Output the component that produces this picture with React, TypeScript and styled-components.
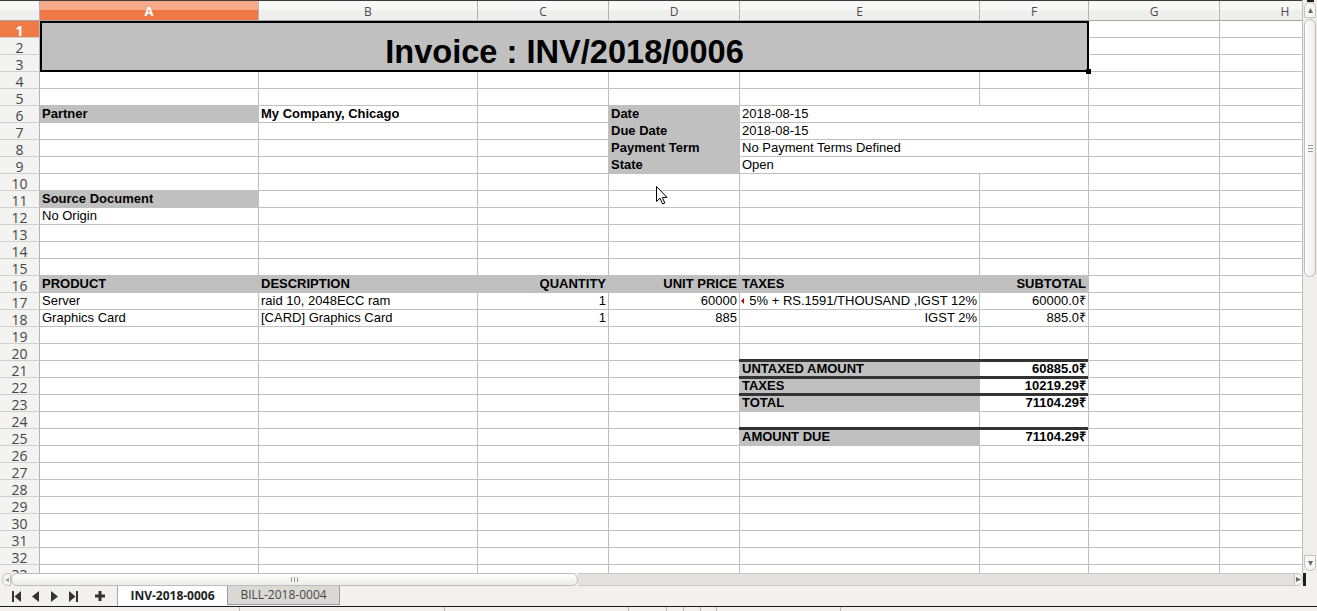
import React from 'react';
import styled, { createGlobalStyle, css } from 'styled-components';

const GlobalStyle = createGlobalStyle`
  html, body { margin: 0; padding: 0; overflow: hidden; background: #f2f1f0; }
  body { font-family: "Liberation Sans", Arial, sans-serif; }
`;

type Align = 'left' | 'right' | 'center';
interface CellDef {
  text?: string;
  bold?: boolean;
  align?: Align;
  fill?: boolean;
  cs?: number;
  rs?: number;
  thick?: boolean;
  title?: boolean;
  clipMark?: boolean;
}

const COLS = [
  { name: 'A', w: 219 },
  { name: 'B', w: 219 },
  { name: 'C', w: 131 },
  { name: 'D', w: 131 },
  { name: 'E', w: 240 },
  { name: 'F', w: 109 },
  { name: 'G', w: 131 },
  { name: 'H', w: 131 },
];
const ROW_COUNT = 33;

const CELLS: Record<string, CellDef> = {
  A1: { text: 'Invoice : INV/2018/0006', title: true, fill: true, cs: 6, rs: 3 },
  A6: { text: 'Partner', bold: true, fill: true },
  B6: { text: 'My Company, Chicago', bold: true },
  D6: { text: 'Date', bold: true, fill: true },
  E6: { text: '2018-08-15', cs: 2 },
  D7: { text: 'Due Date', bold: true, fill: true },
  E7: { text: '2018-08-15', cs: 2 },
  D8: { text: 'Payment Term', bold: true, fill: true },
  E8: { text: 'No Payment Terms Defined', cs: 2 },
  D9: { text: 'State', bold: true, fill: true },
  E9: { text: 'Open', cs: 2 },
  A11: { text: 'Source Document', bold: true, fill: true },
  A12: { text: 'No Origin' },
  A16: { text: 'PRODUCT', bold: true, fill: true },
  B16: { text: 'DESCRIPTION', bold: true, fill: true },
  C16: { text: 'QUANTITY', bold: true, fill: true, align: 'right' },
  D16: { text: 'UNIT PRICE', bold: true, fill: true, align: 'right' },
  E16: { text: 'TAXES', bold: true, fill: true },
  F16: { text: 'SUBTOTAL', bold: true, fill: true, align: 'right' },
  A17: { text: 'Server' },
  B17: { text: 'raid 10, 2048ECC ram' },
  C17: { text: '1', align: 'right' },
  D17: { text: '60000', align: 'right' },
  E17: { text: '5% + RS.1591/THOUSAND ,IGST 12%', align: 'right', clipMark: true },
  F17: { text: '60000.0₹', align: 'right' },
  A18: { text: 'Graphics Card' },
  B18: { text: '[CARD] Graphics Card' },
  C18: { text: '1', align: 'right' },
  D18: { text: '885', align: 'right' },
  E18: { text: 'IGST 2%', align: 'right' },
  F18: { text: '885.0₹', align: 'right' },
  E21: { text: 'UNTAXED AMOUNT', bold: true, fill: true, thick: true },
  F21: { text: '60885.0₹', bold: true, align: 'right', thick: true },
  E22: { text: 'TAXES', bold: true, fill: true, thick: true },
  F22: { text: '10219.29₹', bold: true, align: 'right', thick: true },
  E23: { text: 'TOTAL', bold: true, fill: true, thick: true },
  F23: { text: '71104.29₹', bold: true, align: 'right', thick: true },
  E25: { text: 'AMOUNT DUE', bold: true, fill: true, thick: true },
  F25: { text: '71104.29₹', bold: true, align: 'right', thick: true },
};

const COVERED = new Set<string>();
Object.entries(CELLS).forEach(([key, def]) => {
  const cs = def.cs ?? 1;
  const rs = def.rs ?? 1;
  if (cs === 1 && rs === 1) return;
  const ci = COLS.findIndex((c) => c.name === key[0]);
  const r = parseInt(key.slice(1), 10);
  for (let dr = 0; dr < rs; dr++) {
    for (let dc = 0; dc < cs; dc++) {
      if (dr === 0 && dc === 0) continue;
      COVERED.add(COLS[ci + dc].name + (r + dr));
    }
  }
});

/* ---------- layout ---------- */

const Window = styled.div`
  position: relative;
  width: 1317px;
  height: 611px;
  display: flex;
  flex-direction: column;
  overflow: hidden;
  background: #f2f1f0;
`;

const Main = styled.div`
  display: flex;
  height: 573px;
`;

const Viewport = styled.div`
  width: 1302px;
  height: 573px;
  box-sizing: border-box;
  border-top: 1px solid #3c3c3c;
  overflow: hidden;
  background: #fff;
`;

const Grid = styled.div`
  display: grid;
  grid-template-columns: 40px ${COLS.map((c) => `${c.w}px`).join(' ')};
  grid-template-rows: 20px repeat(${ROW_COUNT}, 17px);
`;

const Corner = styled.div`
  grid-column: 1;
  grid-row: 1;
  box-sizing: border-box;
  border-right: 1px solid #b4b4b4;
  border-bottom: 1px solid #a6a6a6;
  background: linear-gradient(#f8f8f7 0 50%, #efefed 50% 100%);
`;

const ColHeader = styled.div<{ $col: number; $active?: boolean }>`
  grid-column: ${(p) => p.$col};
  grid-row: 1;
  box-sizing: border-box;
  border-right: 1px solid #b4b4b4;
  border-bottom: 1px solid #a6a6a6;
  display: flex;
  align-items: center;
  justify-content: center;
  font-family: "Open Sans", "DejaVu Sans", sans-serif;
  font-size: 12px;
  padding-top: 1px;
  color: #4c4c4c;
  background: linear-gradient(#f8f8f7 0 50%, #efefed 50% 100%);
  ${(p) =>
    p.$active &&
    css`
      background: linear-gradient(#f7aa89 0 50%, #ef7944 50% 100%);
      color: #fff;
      font-weight: 700;
      font-size: 13px;
    `}
`;

const RowHeader = styled.div<{ $row: number; $active?: boolean }>`
  grid-column: 1;
  grid-row: ${(p) => p.$row};
  box-sizing: border-box;
  border-right: 1px solid #b4b4b4;
  border-bottom: 1px solid #cfcfcf;
  display: flex;
  align-items: center;
  justify-content: center;
  padding-top: 2px;
  font-family: "Open Sans", "DejaVu Sans", sans-serif;
  font-size: 14px;
  color: #454545;
  background: #f3f3f1;
  ${(p) =>
    p.$active &&
    css`
      background: #f07b47;
      color: #fff;
      font-weight: 700;
    `}
`;

const Cell = styled.div<{
  $col: number;
  $row: number;
  $cs: number;
  $rs: number;
  $fill?: boolean;
  $bold?: boolean;
  $align: Align;
  $thick?: boolean;
}>`
  grid-column: ${(p) => p.$col} / span ${(p) => p.$cs};
  grid-row: ${(p) => p.$row} / span ${(p) => p.$rs};
  position: relative;
  box-sizing: border-box;
  min-width: 0;
  border-right: 1px solid #c0c0c0;
  border-bottom: 1px solid #c0c0c0;
  background: ${(p) => (p.$fill ? '#c0c0c0' : '#fff')};
  display: flex;
  align-items: flex-end;
  justify-content: ${(p) =>
    p.$align === 'right' ? 'flex-end' : p.$align === 'center' ? 'center' : 'flex-start'};
  padding: 0 2px 1px;
  font-size: 13px;
  line-height: 15px;
  font-weight: ${(p) => (p.$bold ? 700 : 400)};
  color: #000;
  white-space: nowrap;
  ${(p) =>
    p.$thick &&
    css`
      &::before {
        content: '';
        position: absolute;
        left: -1px;
        right: 0;
        top: -2px;
        height: 3px;
        background: #333;
      }
    `}
`;

const TitleCell = styled(Cell)`
  border: 2px solid #000;
  padding: 0;
  font-size: 32.6px;
  line-height: 37px;
  font-weight: 700;
  justify-content: center;
  z-index: 2;
  &::after {
    content: '';
    position: absolute;
    right: -4px;
    bottom: -4px;
    width: 5px;
    height: 5px;
    background: #000;
  }
`;

const CellText = styled.span`
  overflow: hidden;
`;

const ClipMark = styled.span`
  position: absolute;
  left: 1px;
  top: 5px;
  width: 0;
  height: 0;
  border-top: 3px solid transparent;
  border-bottom: 3px solid transparent;
  border-right: 3px solid #c00000;
`;

/* ---------- scrollbars ---------- */

const VScroll = styled.div`
  width: 15px;
  box-sizing: border-box;
  border-left: 1px solid #bdbdbd;
  background: #efeeec;
  display: flex;
  flex-direction: column;
  align-items: center;
`;

const SplitHandle = styled.div<{ $w: number; $h: number }>`
  width: ${(p) => p.$w}px;
  height: ${(p) => p.$h}px;
  background: #1e1e1e;
  flex-shrink: 0;
`;

const VArrow = styled.div<{ $bottom?: boolean }>`
  width: 12px;
  height: 16px;
  flex-shrink: 0;
  box-sizing: border-box;
  border: 1px solid #c2c2c2;
  border-radius: ${(p) => (p.$bottom ? '0 0 6px 6px' : '6px 6px 0 0')};
  background: #f7f7f6;
  display: flex;
  align-items: center;
  justify-content: center;
`;

const VThumb = styled.div`
  width: 12px;
  height: 258px;
  flex-shrink: 0;
  margin-top: 1px;
  box-sizing: border-box;
  border: 1px solid #bdbdbd;
  border-radius: 6px;
  background: linear-gradient(to right, #fefefe, #ececeb);
  display: flex;
  align-items: center;
  justify-content: center;
`;

const Track = styled.div<{ $fixed?: number }>`
  flex: ${(p) => (p.$fixed ? `0 0 ${p.$fixed}px` : '1')};
`;

const HScroll = styled.div`
  height: 13px;
  display: flex;
  align-items: stretch;
  background: #f2f1f0;
`;

const HCap = styled.div<{ $right?: boolean }>`
  width: 9px;
  flex-shrink: 0;
  box-sizing: border-box;
  border: 1px solid #c2c2c2;
  border-radius: ${(p) => (p.$right ? '0 6px 6px 0' : '6px 0 0 6px')};
  background: #f5f5f4;
  display: flex;
  align-items: center;
  justify-content: center;
  margin-left: ${(p) => (p.$right ? '0' : '2px')};
`;

const HThumb = styled.div`
  width: 567px;
  flex-shrink: 0;
  box-sizing: border-box;
  border: 1px solid #bdbdbd;
  border-radius: 6px;
  background: linear-gradient(#fefefe, #ebebea);
  display: flex;
  align-items: center;
  justify-content: center;
`;

const HTrack = styled.div`
  flex: 1;
  box-sizing: border-box;
  border-top: 1px solid #c8c8c8;
  border-bottom: 1px solid #c8c8c8;
  background: #e4e2df;
`;

const HEnd = styled.div`
  width: 14px;
  flex-shrink: 0;
  display: flex;
`;

const Grip = styled.div<{ $vertical?: boolean }>`
  display: flex;
  flex-direction: ${(p) => (p.$vertical ? 'column' : 'row')};
  gap: 2px;
  & > i {
    display: block;
    background: #9a9a9a;
    width: ${(p) => (p.$vertical ? '5px' : '1px')};
    height: ${(p) => (p.$vertical ? '1px' : '5px')};
  }
`;

/* ---------- tabs ---------- */

const TabBar = styled.div`
  height: 20px;
  display: flex;
  align-items: stretch;
  background: #f2f1f0;
  font-family: "Open Sans", "DejaVu Sans", sans-serif;
  font-size: 12px;
`;

const NavGroup = styled.div`
  width: 117px;
  display: flex;
  align-items: center;
  padding-left: 7px;
  box-sizing: border-box;
`;

const NavButton = styled.div<{ $gap?: number }>`
  width: 19px;
  height: 20px;
  margin-left: ${(p) => p.$gap ?? 0}px;
  display: flex;
  align-items: center;
  justify-content: center;
`;

const Tab = styled.div<{ $active?: boolean }>`
  box-sizing: border-box;
  display: flex;
  align-items: center;
  justify-content: center;
  padding-bottom: 1px;
  ${(p) =>
    p.$active
      ? css`
          width: 110px;
          background: #fff;
          border-left: 1px solid #a8a8a8;
          font-weight: 700;
          color: #222;
        `
      : css`
          width: 113px;
          height: 19px;
          background: #dbd9d6;
          border: 1px solid #9c9c9c;
          border-top: none;
          color: #484848;
        `}
`;

const StatusBar = styled.div`
  flex: 1;
  border-top: 1px solid #1c1c1c;
  display: flex;
  background: #f2f1f0;
`;

const StatusField = styled.div<{ $w: number }>`
  width: ${(p) => p.$w}px;
  box-sizing: border-box;
  border-right: 1px solid #b8b8b8;
  flex-shrink: 0;
`;

const Pointer = styled.svg`
  position: absolute;
  left: 656px;
  top: 186px;
  z-index: 10;
`;

/* ---------- icons ---------- */

const Tri = ({ dir, color = '#6a6a6a', size = 5 }: { dir: 'up' | 'down' | 'left' | 'right'; color?: string; size?: number }) => {
  const s = size;
  const pts =
    dir === 'up'
      ? `0,${s} ${s},${s} ${s / 2},0`
      : dir === 'down'
      ? `0,0 ${s},0 ${s / 2},${s}`
      : dir === 'left'
      ? `${s},0 ${s},${s} 0,${s / 2}`
      : `0,0 0,${s} ${s},${s / 2}`;
  return (
    <svg width={s} height={s} viewBox={`0 0 ${s} ${s}`}>
      <polygon points={pts} fill={color} />
    </svg>
  );
};

const FirstIcon = () => (
  <svg width="9" height="11" viewBox="0 0 9 11">
    <rect x="0" y="0" width="2" height="11" fill="#333" />
    <polygon points="9,0 9,11 2.5,5.5" fill="#333" />
  </svg>
);
const PrevIcon = () => (
  <svg width="7" height="11" viewBox="0 0 7 11">
    <polygon points="7,0 7,11 0,5.5" fill="#333" />
  </svg>
);
const NextIcon = () => (
  <svg width="7" height="11" viewBox="0 0 7 11">
    <polygon points="0,0 0,11 7,5.5" fill="#333" />
  </svg>
);
const LastIcon = () => (
  <svg width="9" height="11" viewBox="0 0 9 11">
    <polygon points="0,0 0,11 6.5,5.5" fill="#333" />
    <rect x="7" y="0" width="2" height="11" fill="#333" />
  </svg>
);
const PlusIcon = () => (
  <svg width="10" height="10" viewBox="0 0 10 10">
    <path d="M3.5 0h3v3.5H10v3H6.5V10h-3V6.5H0v-3h3.5z" fill="#333" />
  </svg>
);

/* ---------- app ---------- */

export default function App() {
  const items: React.ReactNode[] = [];
  items.push(<Corner key="corner" />);
  COLS.forEach((c, i) => {
    items.push(
      <ColHeader key={`h${c.name}`} $col={i + 2} $active={c.name === 'A'}>
        {c.name}
      </ColHeader>
    );
  });
  for (let r = 1; r <= ROW_COUNT; r++) {
    items.push(
      <RowHeader key={`r${r}`} $row={r + 1} $active={r === 1}>
        {r}
      </RowHeader>
    );
    COLS.forEach((c, i) => {
      const key = c.name + r;
      if (COVERED.has(key)) return;
      const def = CELLS[key] ?? {};
      const props = {
        $col: i + 2,
        $row: r + 1,
        $cs: def.cs ?? 1,
        $rs: def.rs ?? 1,
        $fill: def.fill,
        $bold: def.bold,
        $align: def.align ?? 'left',
        $thick: def.thick,
      };
      if (def.title) {
        items.push(
          <TitleCell key={key} {...props}>
            {def.text}
          </TitleCell>
        );
      } else {
        items.push(
          <Cell key={key} {...props}>
            {def.clipMark && <ClipMark />}
            {def.text && <CellText>{def.text}</CellText>}
          </Cell>
        );
      }
    });
  }

  return (
    <>
      <GlobalStyle />
      <Window>
        <Main>
          <Viewport>
            <Grid>{items}</Grid>
          </Viewport>
          <VScroll>
            <SplitHandle $w={7} $h={2} />
            <VArrow>
              <Tri dir="up" size={5} />
            </VArrow>
            <VThumb>
              <Grip $vertical>
                <i />
                <i />
                <i />
              </Grip>
            </VThumb>
            <Track />
            <VArrow $bottom>
              <Tri dir="down" size={5} />
            </VArrow>
            <Track $fixed={2} />
          </VScroll>
        </Main>
        <HScroll>
          <HCap>
            <Tri dir="left" size={4} color="#9a9a9a" />
          </HCap>
          <HThumb>
            <Grip>
              <i />
              <i />
              <i />
            </Grip>
          </HThumb>
          <HTrack />
          <HCap $right>
            <Tri dir="right" size={5} />
          </HCap>
          <HEnd>
            <SplitHandle $w={3} $h={13} />
          </HEnd>
        </HScroll>
        <TabBar>
          <NavGroup>
            <NavButton>
              <FirstIcon />
            </NavButton>
            <NavButton>
              <PrevIcon />
            </NavButton>
            <NavButton>
              <NextIcon />
            </NavButton>
            <NavButton>
              <LastIcon />
            </NavButton>
            <NavButton $gap={7}>
              <PlusIcon />
            </NavButton>
          </NavGroup>
          <Tab $active>INV-2018-0006</Tab>
          <Tab>BILL-2018-0004</Tab>
        </TabBar>
        <StatusBar>
          <StatusField $w={240} />
          <StatusField $w={205} />
          <StatusField $w={184} />
          <StatusField $w={38} />
          <StatusField $w={17} />
          <StatusField $w={17} />
          <StatusField $w={16} />
          <StatusField $w={124} />
        </StatusBar>
        <Pointer width="12" height="19" viewBox="0 0 12 19">
          <path
            d="M0.5 0.5 L0.5 15.5 L4 12.2 L6.6 18 L8.8 17 L6.3 11.4 L11 11.4 Z"
            fill="#fff"
            stroke="#000"
            strokeWidth="1"
            strokeLinejoin="round"
          />
        </Pointer>
      </Window>
    </>
  );
}
